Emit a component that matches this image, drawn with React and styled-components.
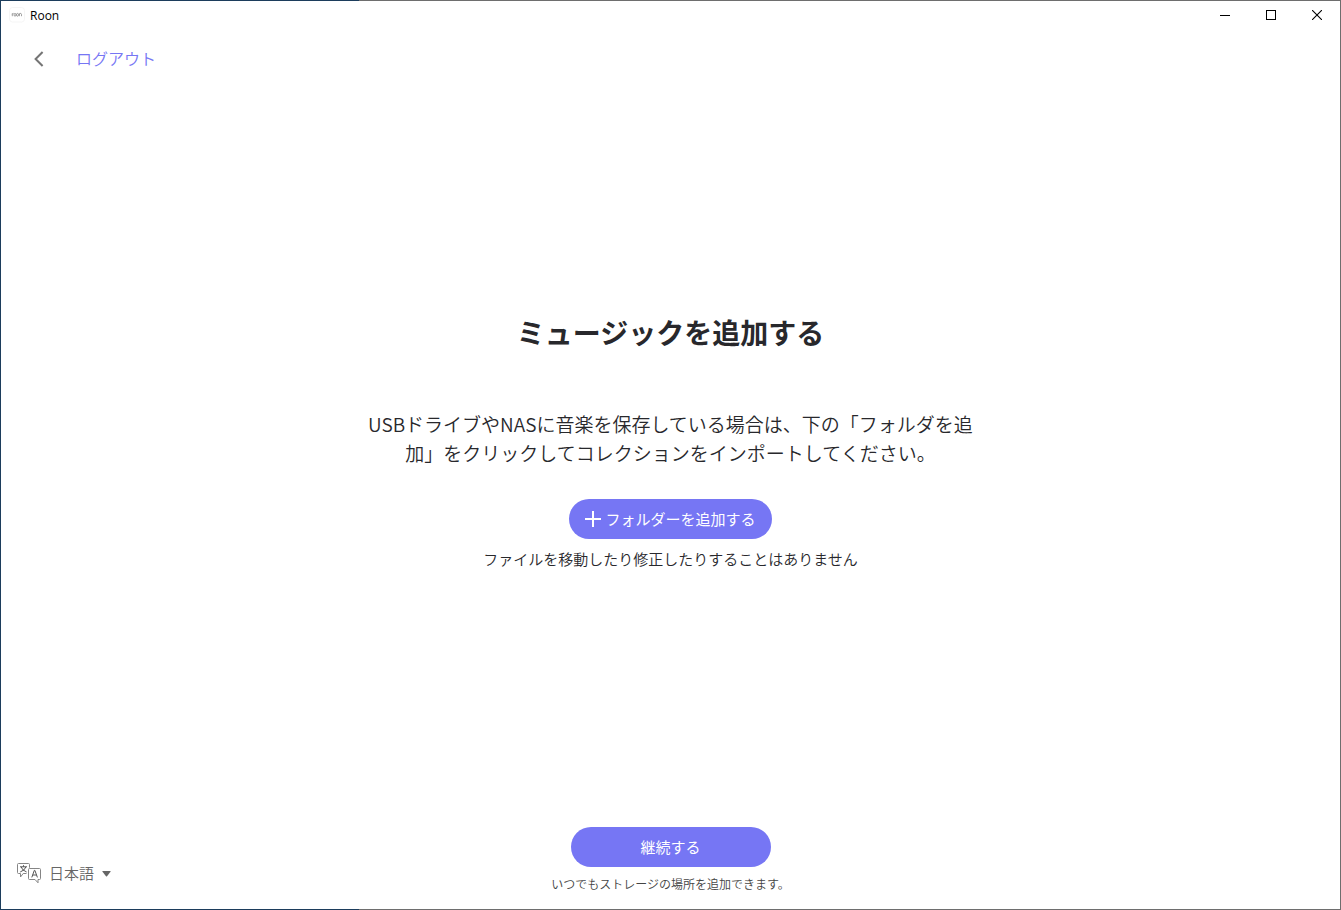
import styled, {createGlobalStyle} from "styled-components";

export default function App() {
    return (
        <Window>
            <GlobalStyle/>
            <TitleBar>
                <AppLogo/>
                <AppName>Roon</AppName>
                <WindowButton aria-label="Minimize"><MinimizeIcon/></WindowButton>
                <WindowButton aria-label="Maximize"><MaximizeIcon/></WindowButton>
                <WindowButton aria-label="Close"><CloseIcon/></WindowButton>
            </TitleBar>
            <Nav>
                <BackButton aria-label="戻る"><BackIcon/></BackButton>
                <LogoutLink href="#logout">ログアウト</LogoutLink>
            </Nav>
            <Main>
                <Title>ミュージックを追加する</Title>
                <Description>
                    USBドライブやNASに音楽を保存している場合は、下の「フォルダを追加」をクリックしてコレクションをインポートしてください。
                </Description>
                <PillButton>
                    <PlusIcon/>
                    フォルダーを追加する
                </PillButton>
                <Note>ファイルを移動したり修正したりすることはありません</Note>
            </Main>
            <Footer>
                <LanguageButton aria-haspopup="listbox">
                    <LanguageIcon/>
                    日本語
                    <CaretIcon/>
                </LanguageButton>
                <FooterActions>
                    <PillButton $wide>継続する</PillButton>
                    <SmallNote>いつでもストレージの場所を追加できます。</SmallNote>
                </FooterActions>
            </Footer>
        </Window>
    )
}

const AppLogo = () => (
    <svg width="16" height="16" viewBox="0 0 16 16" fill="none" stroke="#777" strokeWidth="0.7" aria-hidden="true">
        <rect x="0.5" y="0.5" width="15" height="14.5" rx="3" fill="#fff" stroke="#f1f1f1"/>
        <path d="M3.3 9.2V6.4M3.3 7.2q.3-.8 1.2-.8M10.4 9.2V6.4M10.4 7.4q.3-1 1.1-1t1 1v1.8"/>
        <ellipse cx="6" cy="7.8" rx="1" ry="1.4"/>
        <ellipse cx="8.5" cy="7.8" rx="1" ry="1.4"/>
    </svg>
)

const MinimizeIcon = () => (
    <svg width="10" height="10" viewBox="0 0 10 10" aria-hidden="true">
        <path d="M0 5h10v1H0z" fill="#000"/>
    </svg>
)

const MaximizeIcon = () => (
    <svg width="10" height="10" viewBox="0 0 10 10" aria-hidden="true">
        <rect x="0.5" y="0.5" width="9" height="9" fill="none" stroke="#000"/>
    </svg>
)

const CloseIcon = () => (
    <svg width="10" height="10" viewBox="0 0 10 10" aria-hidden="true">
        <path d="M0 0l10 10M10 0L0 10" stroke="#000" strokeWidth="1.1"/>
    </svg>
)

const BackIcon = () => (
    <svg width="10" height="16" viewBox="0 0 10 16" fill="none" aria-hidden="true">
        <path d="M8.6 1L1.6 8l7 7" stroke="#757575" strokeWidth="2"/>
    </svg>
)

const PlusIcon = () => (
    <svg width="16" height="16" viewBox="0 0 16 16" aria-hidden="true">
        <path d="M8 0v16M0 8h16" stroke="#fff" strokeWidth="2"/>
    </svg>
)

const LanguageIcon = () => (
    <svg width="24" height="21" viewBox="0 0 24 21" fill="none" stroke="#858585" aria-hidden="true">
        <path d="M9.5 10.5H6.2L3.5 14v-3.5H1.5a1 1 0 0 1-1-1v-8a1 1 0 0 1 1-1h10a1 1 0 0 1 1 1v3.2"/>
        <path d="M12.5 5.5h10a1 1 0 0 1 1 1v9a1 1 0 0 1-1 1h-1.5v3.3l-3-3.3h-5.5a1 1 0 0 1-1-1v-9a1 1 0 0 1 1-1z"/>
        <path d="M3 3.8h7M6.5 2.2v1.6M4.2 4q.8 3.2 5.4 5M8.8 4q-.8 3.2-5.6 5" stroke="#555"/>
        <path d="M14.8 14.4l2.5-7h.6l2.5 7M15.7 12h3.8" stroke="#555"/>
    </svg>
)

const CaretIcon = () => (
    <svg width="9" height="8" viewBox="0 0 9 8" aria-hidden="true">
        <path d="M0.8 2h7.4q.8 0 .3.7L5 7.3q-.5.6-1 0L.5 2.7Q0 2 .8 2z" fill="#666"/>
    </svg>
)

const GlobalStyle = createGlobalStyle`
  * {
    box-sizing: border-box;
  }
  body {
    margin: 0;
    background-color: #fff;
    color: #28282c;
    font-family: "Noto Sans CJK JP", sans-serif;
    font-weight: 350;
  }
  button {
    padding: 0;
    border: 0;
    background: none;
    font: inherit;
    cursor: pointer;
  }
  svg {
    display: block;
    flex: none;
  }
`
// The edge over the desktop window behind it is blue, the rest is gray
const Window = styled.div`
  display: flex;
  flex-direction: column;
  min-height: 100vh;
  padding: 1px;
  background:
    linear-gradient(#fff, #fff) content-box,
    linear-gradient(90deg, #1c3d5c 359px, #6e6e6e 359px);
`
const TitleBar = styled.header`
  display: flex;
  align-items: center;
  height: 28px;
  padding-left: 8px;
`
const AppName = styled.span`
  flex: 1;
  margin-left: 5px;
  padding-top: 2px;
  font-family: "Open Sans", sans-serif;
  font-size: 12px;
  font-weight: 400;
  line-height: 18px;
  color: #000;
`
const WindowButton = styled.button`
  display: flex;
  align-items: center;
  justify-content: center;
  width: 46px;
  height: 28px;
`
const Nav = styled.nav`
  display: flex;
  align-items: center;
  height: 60px;
  padding-left: 17px;
`
const BackButton = styled.button`
  display: flex;
  align-items: center;
  justify-content: center;
  width: 42px;
  height: 40px;
`
const LogoutLink = styled.a`
  margin-left: 16px;
  padding-bottom: 2px;
  font-size: 16px;
  line-height: 24px;
  color: #7676f4;
  text-decoration: none;
`
const Main = styled.main`
  display: flex;
  flex: 1;
  flex-direction: column;
  align-items: center;
  justify-content: center;
  padding: 0 20px 18px;
`
const Title = styled.h1`
  margin: 0;
  font-size: 28px;
  font-weight: 700;
  line-height: 40px;
`
const Description = styled.p`
  max-width: 620px;
  margin: 57px 0 32px;
  font-size: 19px;
  line-height: 29px;
  text-align: center;
`
const PillButton = styled.button`
  display: flex;
  align-items: center;
  justify-content: center;
  gap: 4px;
  width: ${props => props.$wide ? "200px" : "auto"};
  height: 40px;
  padding: 0 16px;
  border-radius: 20px;
  background-color: #7676f4;
  color: #fff;
  font-size: 15px;
  font-weight: 400;
  line-height: 22px;
`
const Note = styled.p`
  margin: 9px 0 0;
  font-size: 15px;
  line-height: 22px;
`
const Footer = styled.footer`
  display: grid;
  grid-template-columns: 1fr auto 1fr;
  align-items: end;
  padding: 16px;
`
const LanguageButton = styled.button`
  display: flex;
  align-items: center;
  justify-self: start;
  gap: 8px;
  margin-bottom: 9px;
  color: #666;
  font-size: 15px;
  line-height: 22px;
`
const FooterActions = styled.div`
  display: flex;
  flex-direction: column;
  align-items: center;
`
const SmallNote = styled.p`
  margin: 8px 0 0;
  color: #444;
  font-size: 12px;
  line-height: 18px;
`
